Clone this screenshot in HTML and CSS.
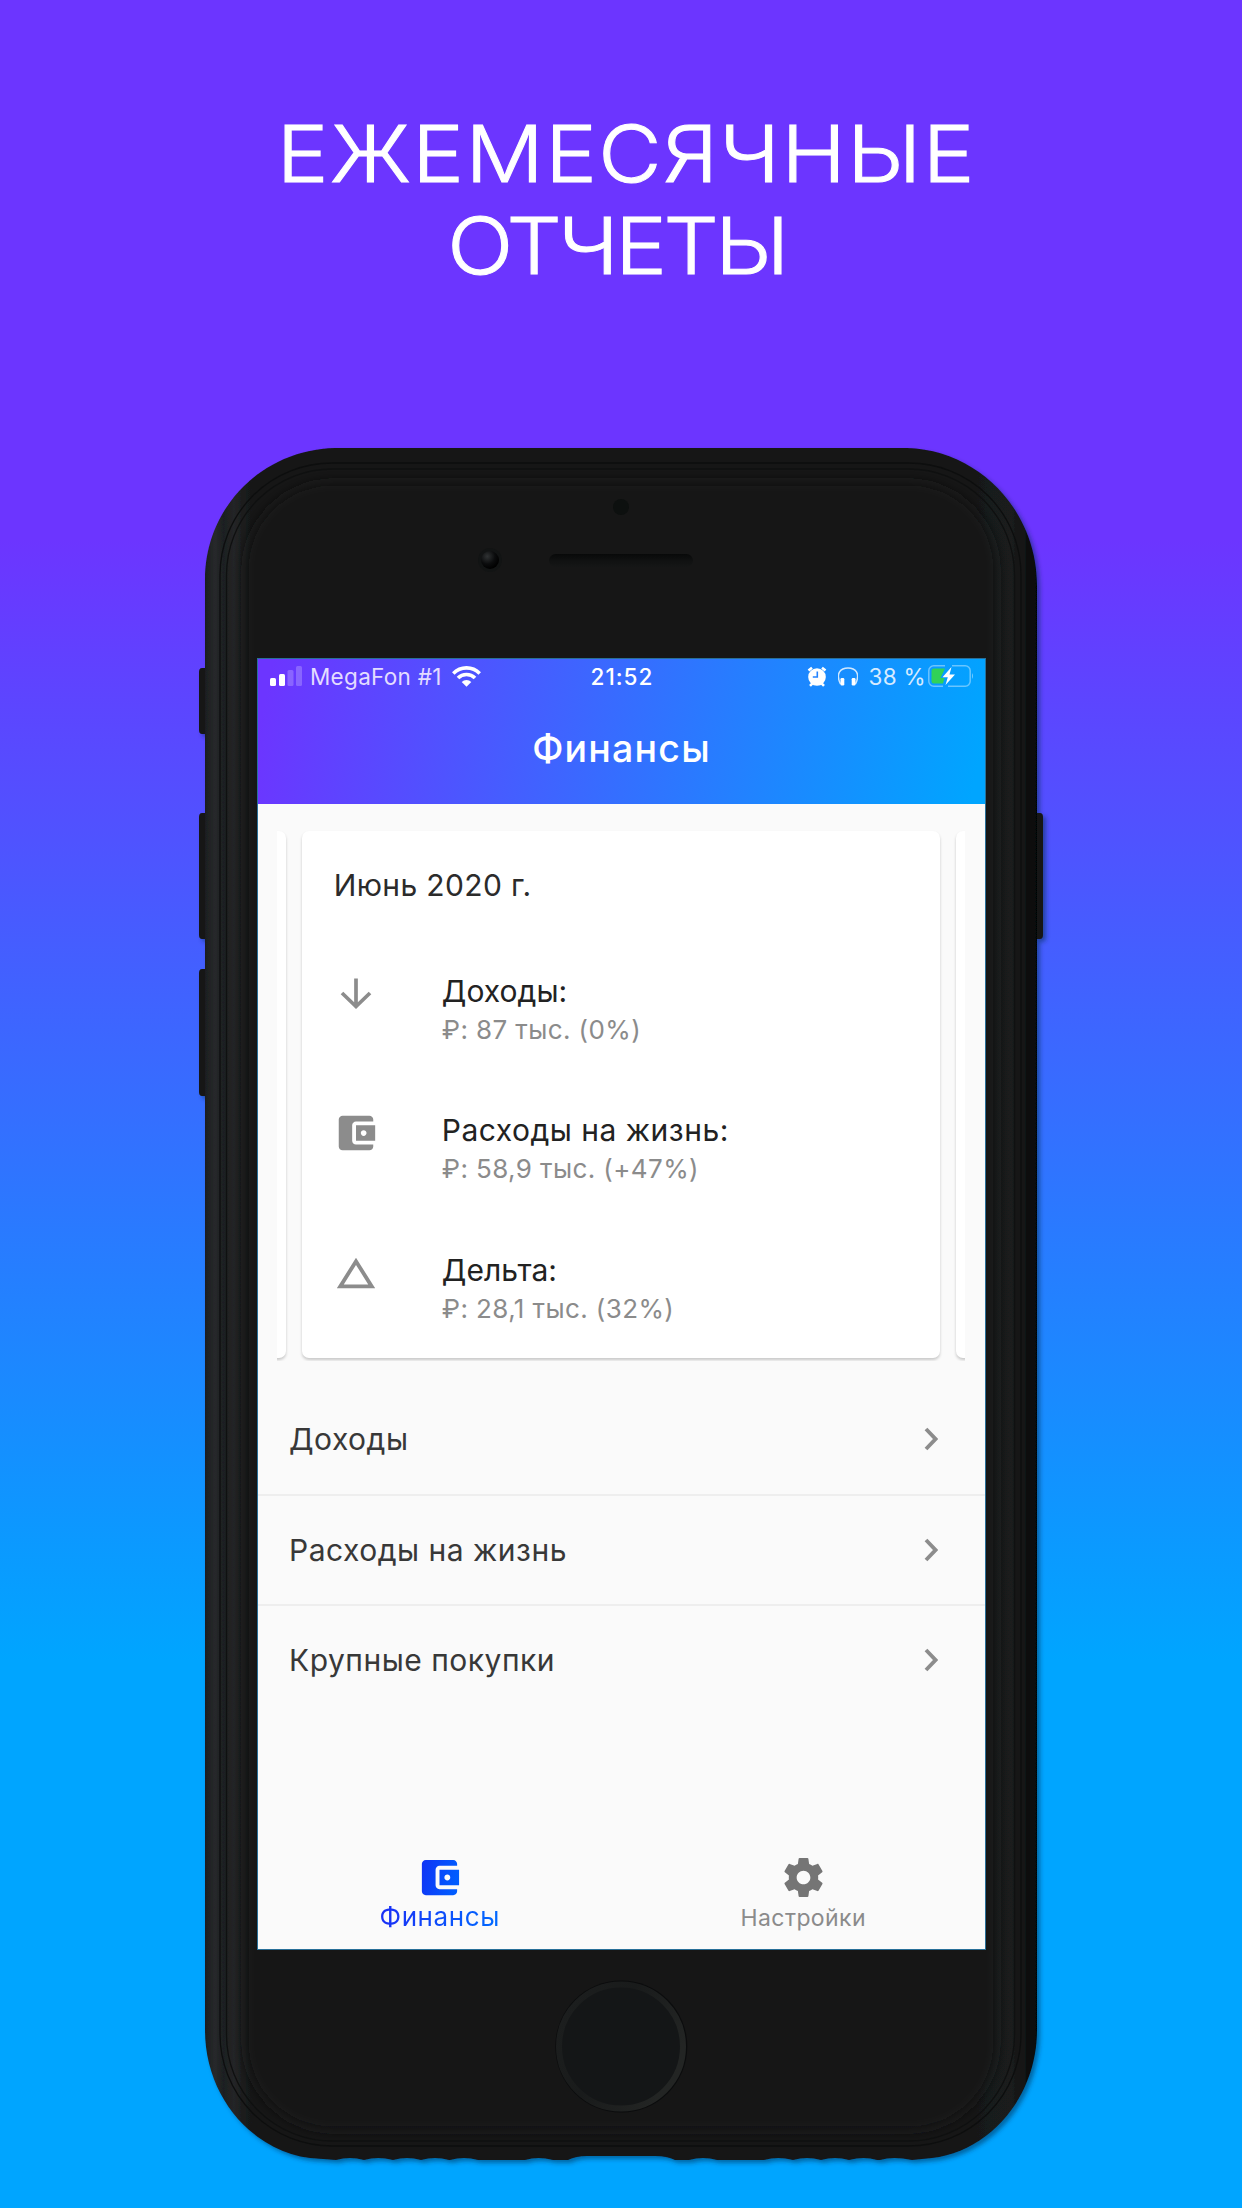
FILE: index.html
```html
<!DOCTYPE html>
<html lang="ru">
<head>
<meta charset="utf-8">
<title>Ежемесячные отчеты</title>
<link rel="stylesheet" href="styles.css">
</head>
<body>
<svg class="defs" aria-hidden="true">
  <defs>
    <linearGradient id="tab-active" x1="0" y1="0" x2="1" y2="0.2"><stop offset="0" stop-color="#1033f5"/><stop offset="1" stop-color="#005cff"/></linearGradient>
    <symbol id="wallet" viewBox="0 0 24 24"><path d="M21 18v1c0 1.100-.9 2-2 2H5c-1.110 0-2-.9-2-2V5c0-1.100.89-2 2-2h14c1.100 0 2 .9 2 2v1h-9c-1.110 0-2 .9-2 2v8c0 1.100.89 2 2 2h9zm-9-2h10V8H12v8zm4-2.500c-.83 0-1.500-.67-1.500-1.500s.67-1.500 1.500-1.500 1.500.67 1.500 1.500-.67 1.500-1.500 1.500z"/></symbol>
    <symbol id="chevron" viewBox="0 0 14 24"><path d="M2 2l9.500 10L2 22" fill="none" stroke="#8c8c8c" stroke-width="3.800"/></symbol>
  </defs>
</svg>
<main class="poster">
  <h1 class="headline"><span class="headline-line first">ЕЖЕМЕСЯЧНЫЕ</span><span class="headline-line second">ОТЧЕТЫ</span></h1>
  <div class="phone">
    <svg class="device" viewBox="190 440 864 1740" aria-hidden="true">
      <defs>
        <linearGradient id="body" x1="205" x2="1037" y1="0" y2="0" gradientUnits="userSpaceOnUse">
          <stop offset="0" stop-color="#1c1e1f"/><stop offset=".012" stop-color="#27292b"/><stop offset=".022" stop-color="#1d1f20"/><stop offset=".035" stop-color="#232526"/><stop offset=".05" stop-color="#191a1a"/><stop offset=".07" stop-color="#141617"/>
          <stop offset=".9" stop-color="#141617"/><stop offset=".94" stop-color="#191a1a"/><stop offset=".97" stop-color="#1a1b1b"/><stop offset=".985" stop-color="#121313"/><stop offset="1" stop-color="#050606"/>
        </linearGradient>
        <linearGradient id="face" x1="0" x2="0" y1="462" y2="2146" gradientUnits="userSpaceOnUse">
          <stop offset="0" stop-color="#1b1c1c"/><stop offset=".018" stop-color="#171817"/><stop offset=".05" stop-color="#141617"/><stop offset=".95" stop-color="#141617"/><stop offset="1" stop-color="#191a1a"/>
        </linearGradient>
        <radialGradient id="lens" cx=".35" cy=".3" r=".7"><stop offset="0" stop-color="#303334"/><stop offset=".6" stop-color="#0b0c0d"/><stop offset="1" stop-color="#000"/></radialGradient>
        <linearGradient id="ring" x1="0" x2="1" y1="0" y2="0.5"><stop offset="0" stop-color="#1d1f1f"/><stop offset=".5" stop-color="#191b1b"/><stop offset="1" stop-color="#232524"/></linearGradient>
        <linearGradient id="slot" x1="0" x2="0" y1="0" y2="1"><stop offset="0" stop-color="#080909"/><stop offset=".5" stop-color="#101111"/><stop offset="1" stop-color="#151616"/></linearGradient>
        <filter id="drop" x="-5%" y="-5%" width="110%" height="110%"><feDropShadow dx="3" dy="3" stdDeviation="2.200" flood-color="#03284f" flood-opacity=".5"/></filter>
        <filter id="soft"><feGaussianBlur stdDeviation="6"/></filter>
      </defs>
      <g filter="url(#drop)">
        <path fill="#151617" d="M202 668h5v66h-5q-3 0-3-4v-58q0-4 3-4zM202 813h5v126h-5q-3 0-3-4V817q0-4 3-4zM202 969h5v127h-5q-3 0-3-4V973q0-4 3-4zM1035 813h5q3 0 3 4v118q0 4-3 4h-5z"/>
        <path fill="url(#body)" d="M335 448H907C980 450 1037 512 1037 585V2030C1037 2096 991 2151 932 2158L912 2160Q893 2156 880 2160H877Q864 2156 849 2160Q835 2156 821 2160Q807 2156 793 2160Q778 2156 764 2160H717Q703 2156 689 2160H675Q667 2156 655 2156H587Q576 2156 568 2160H553Q538 2156 525 2160H478Q464 2156 450 2160H449Q435 2156 421 2160Q407 2156 393 2160Q378 2156 364 2160Q350 2156 336 2160L310 2158C251 2150 205 2096 205 2030V580C205 507 262 450 335 448Z"/>
      </g>
      <rect x="220" y="463" width="801" height="1683" rx="112" fill="none" stroke="#0d0e0e" stroke-width="1.300"/>
      <rect x="226.500" y="469" width="788" height="1672" rx="106" fill="none" stroke="#0f1010" stroke-width="1.300"/>
      <rect x="245" y="482" width="752" height="1648" rx="88" fill="url(#face)" filter="url(#soft)"/>
      <circle cx="621" cy="507" r="8" fill="#0d100f"/>
      <circle cx="490" cy="560" r="12" fill="#121414"/>
      <circle cx="490" cy="560" r="9" fill="url(#lens)"/>
      <rect x="549" y="554" width="144" height="13" rx="6.500" fill="url(#slot)"/>
      <circle cx="621.300" cy="2046.500" r="66" fill="#0b0c0d"/>
      <circle cx="621" cy="2046.500" r="62" fill="#141617" stroke="url(#ring)" stroke-width="6"/>
    </svg>
    <section class="screen">
      <header class="app-header">
        <div class="status">
          <div class="status-left">
            <svg class="signal" viewBox="0 0 34 20"><g fill="#fff"><rect y="12" width="6" height="8" rx="1.500"/><rect x="9" y="8" width="6" height="12" rx="1.500"/><g opacity=".22"><rect x="17.500" y="4" width="6" height="16" rx="1.500"/><rect x="26" width="6" height="20" rx="1.500"/></g></g></svg>
            <span class="carrier">MegaFon #1</span>
            <svg class="wifi" viewBox="0 0 29 21"><g fill="none" stroke="#fff" stroke-width="3.600"><path d="M1.300 7.400a18.600 18.600 0 0 1 26.400 0"/><path d="M6 12a12 12 0 0 1 17 0"/></g><path fill="#fff" d="M9.700 16a6.800 6.800 0 0 1 9.600 0l-4.800 4.800z"/></svg>
          </div>
          <time class="clock">21:52</time>
          <div class="status-right">
            <svg class="alarm" viewBox="0 0 20 21"><circle cx="10" cy="11" r="8.800" fill="#fff"/><path d="M1.500 4.500L5 1.700M18.500 4.500L15 1.700M3 19.800l2.500-2.500M17 19.800l-2.500-2.500" stroke="#fff" stroke-width="2.600"/><path d="M10.300 5.500V11H5.800" fill="none" stroke="#2584ff" stroke-width="1.600"/></svg>
            <svg class="headphones" viewBox="0 0 20 19"><path d="M2.500 17C-3 6 3 1 10 1s13 5 7.500 16" fill="none" stroke="#cfe7ff" stroke-width="1.500"/><rect x="2.500" y="11" width="3.800" height="7.500" rx="1.200" fill="#fff"/><rect x="13.700" y="11" width="3.800" height="7.500" rx="1.200" fill="#fff"/></svg>
            <span class="percent">38 %</span>
            <svg class="battery" viewBox="0 0 46 22"><path d="M17 .8H6A5 5 0 0 0 .8 6v10A5 5 0 0 0 6 21.200h9M24 .8h13A5 5 0 0 1 42.200 6v10a5 5 0 0 1-5.200 5.200H20" fill="none" stroke="#fff" stroke-opacity=".4" stroke-width="1.500"/><path d="M44 8q2 3 0 6z" fill="#fff" fill-opacity=".45"/><path d="M6 3.500h11l-4.500 9.500h4l-1.500 5.500H6q-2.500 0-2.500-2.500V6Q3.500 3.500 6 3.500z" fill="#31d158"/><path d="M23.500 2L14.500 12.300h5.300L17.500 20l9.500-10.500h-5.500z" fill="#fff"/></svg>
          </div>
        </div>
        <h2 class="app-title">Финансы</h2>
      </header>
      <div class="carousel">
        <div class="card peek"></div>
        <article class="card report">
          <h3 class="period">Июнь 2020 г.</h3>
          <div class="metric">
            <svg class="metric-icon" viewBox="0 0 46 46"><path d="M23 7.500v29M9 22l14 13.500 14-13.500" fill="none" stroke="#8c8c8c" stroke-width="3.700"/></svg>
            <div><p class="metric-name short">Доходы:</p><p class="metric-value">₽: 87 тыс. (0%)</p></div>
          </div>
          <div class="metric">
            <svg class="metric-icon" fill="#8c8c8c"><use href="#wallet"/></svg>
            <div><p class="metric-name">Расходы на жизнь:</p><p class="metric-value">₽: 58,9 тыс. (+47%)</p></div>
          </div>
          <div class="metric">
            <svg class="metric-icon" viewBox="0 0 24 24"><path fill="#8c8c8c" d="M12 7.770L18.390 18H5.610L12 7.770M12 4L2 20h20L12 4z"/></svg>
            <div><p class="metric-name short">Дельта:</p><p class="metric-value">₽: 28,1 тыс. (32%)</p></div>
          </div>
        </article>
        <div class="card peek"></div>
      </div>
      <nav class="sections">
        <a class="section-row">Доходы<svg class="chevron"><use href="#chevron"/></svg></a>
        <a class="section-row">Расходы на жизнь<svg class="chevron"><use href="#chevron"/></svg></a>
        <a class="section-row">Крупные покупки<svg class="chevron"><use href="#chevron"/></svg></a>
      </nav>
      <footer class="tabs">
        <a class="tab active"><svg class="tab-icon" fill="url(#tab-active)"><use href="#wallet"/></svg><span class="tab-label">Финансы</span></a>
        <a class="tab"><svg class="tab-icon" viewBox="0 0 24 24"><path fill="#757575" d="M19.430 12.980c.04-.32.07-.64.07-.98s-.03-.66-.07-.98l2.110-1.650c.19-.15.24-.42.12-.64l-2-3.460c-.12-.22-.39-.3-.61-.22l-2.490 1c-.52-.4-1.080-.73-1.690-.98l-.38-2.650C14.460 2.180 14.250 2 14 2h-4c-.25 0-.46.18-.49.42l-.38 2.650c-.61.25-1.170.59-1.690.98l-2.490-1c-.23-.09-.49 0-.61.22l-2 3.460c-.13.22-.07.49.12.64l2.110 1.650c-.04.32-.07.65-.07.98s.03.66.07.98l-2.110 1.650c-.19.15-.24.42-.12.64l2 3.460c.12.22.39.3.61.22l2.490-1c.52.4 1.080.73 1.690.98l.38 2.650c.03.24.24.42.49.42h4c.25 0 .46-.18.49-.42l.38-2.650c.61-.25 1.170-.59 1.690-.98l2.490 1c.23.09.49 0 .61-.22l2-3.460c.12-.22.07-.49-.12-.64l-2.110-1.650zM12 15.500c-1.930 0-3.500-1.570-3.500-3.500s1.570-3.500 3.500-3.500 3.500 1.570 3.500 3.500-1.570 3.500-3.500 3.500z"/></svg><span class="tab-label">Настройки</span></a>
      </footer>
    </section>
  </div>
</main>
</body>
</html>
```
FILE: styles.css
```css
* { box-sizing: border-box; }
body { margin: 0; font-family: Inter, "Noto Sans", sans-serif; }
h1, h2, h3, p { margin: 0; font-weight: 400; }
svg { display: block; flex: none; }
.defs { position: absolute; width: 0; height: 0; }

.poster {
  height: 2208px;
  overflow: hidden;
  background: linear-gradient(#6c35ff 0, #6c35ff 540px, #00a5ff 1660px);
}
.headline {
  display: flex;
  flex-direction: column;
  align-items: center;
  height: 440px;
  padding-top: 107px;
  color: #fff;
  font-size: 79px;
  font-weight: 300;
  line-height: 92px;
  white-space: nowrap;
}
.headline-line { -webkit-text-stroke: 1px #fff; transform: scaleX(1.1); }
.first { padding-left: 10px; letter-spacing: 1.300px; }
.second { padding-right: 9px; letter-spacing: -3.200px; }

.phone {
  position: relative;
  width: 864px;
  height: 1740px;
  margin-left: 190px;
  padding: 218.5px 69px 0 68px;
}
.device { position: absolute; inset: 0; width: 864px; height: 1740px; }
.screen {
  position: relative;
  display: flex;
  flex-direction: column;
  height: 1290.500px;
  background: #fafafa;
  box-shadow: 0 0 0 1px #286f98;
  overflow: hidden;
}
.app-header {
  height: 145.500px;
  background: linear-gradient(102deg, #6c35ff 2%, #00a5ff 98%);
  color: #fff;
}
.status {
  display: grid;
  grid-template-columns: 1fr auto 1fr;
  align-items: center;
  height: 35px;
  padding: 0 11px 0 12px;
  font-size: 22.500px;
  line-height: 35px;
  white-space: nowrap;
}
.status-left, .status-right { display: flex; align-items: center; }
.status-right { justify-content: flex-end; }
.signal { width: 34px; height: 20px; }
.carrier { margin-left: 6px; color: #e3dcff; letter-spacing: .3px; }
.wifi { width: 29px; height: 21px; margin-left: 10px; }
.clock { font-weight: 500; letter-spacing: 1px; }
.alarm { width: 20px; height: 21px; margin-right: 11px; }
.headphones { width: 20px; height: 19px; margin-right: 11px; }
.percent { color: #d6ebff; letter-spacing: .3px; }
.battery { width: 46px; height: 22px; margin-left: 2px; }
.app-title {
  height: 80px;
  padding-top: 15px;
  text-align: center;
  font-size: 37.500px;
  font-weight: 500;
  line-height: 80px;
  letter-spacing: 1.200px;
}

.carousel {
  display: flex;
  justify-content: center;
  gap: 15.500px;
  height: 545px;
  margin: 12px 20px 24px 19px;
  padding-top: 15px;
  overflow: hidden;
}
.card {
  flex: none;
  height: 527px;
  background: #fff;
  border-radius: 7px;
  box-shadow: 0 2px 3px rgba(0, 0, 0, .2);
}
.peek { width: 100px; }
.report { width: 638.500px; padding: 34px 33px 0 32px; color: #2b2b2b; }
.period { font-size: 30px; line-height: 40px; letter-spacing: .35px; }
.metric { display: flex; height: 139.600px; }
.period + .metric { margin-top: 65.500px; }
.metric-icon { width: 46px; height: 46px; margin: 0 63px 0 -1px; }
.metric-name { font-size: 30px; line-height: 41px; letter-spacing: .5px; color: #222; white-space: nowrap; }
.metric-name.short { letter-spacing: .05px; }
.metric-value { font-size: 26px; line-height: 36px; letter-spacing: .4px; color: #8b8b8b; white-space: nowrap; }

.sections { display: flex; flex-direction: column; }
.section-row {
  display: flex;
  align-items: center;
  justify-content: space-between;
  height: 110.500px;
  padding: 0 47px 0 31px;
  border-bottom: 2px solid #eee;
  color: #383838;
  font-size: 30px;
  letter-spacing: .5px;
}
.section-row:last-child { border-bottom-color: transparent; }
.chevron { width: 14px; height: 24px; }
.tabs { display: flex; margin-top: auto; height: 98px; }
.tab {
  display: flex;
  flex: 1;
  flex-direction: column;
  align-items: center;
  padding-top: 3px;
  color: #8b8b8b;
  font-size: 23px;
  letter-spacing: .4px;
}
.tab-icon { width: 47px; height: 47px; }
.tab-label { line-height: 34px; }
.active .tab-label {
  font-size: 26px;
  line-height: 32px;
  letter-spacing: .6px;
  background: linear-gradient(100deg, #1a2df5, #006bff);
  -webkit-background-clip: text;
  background-clip: text;
  color: transparent;
}
```
